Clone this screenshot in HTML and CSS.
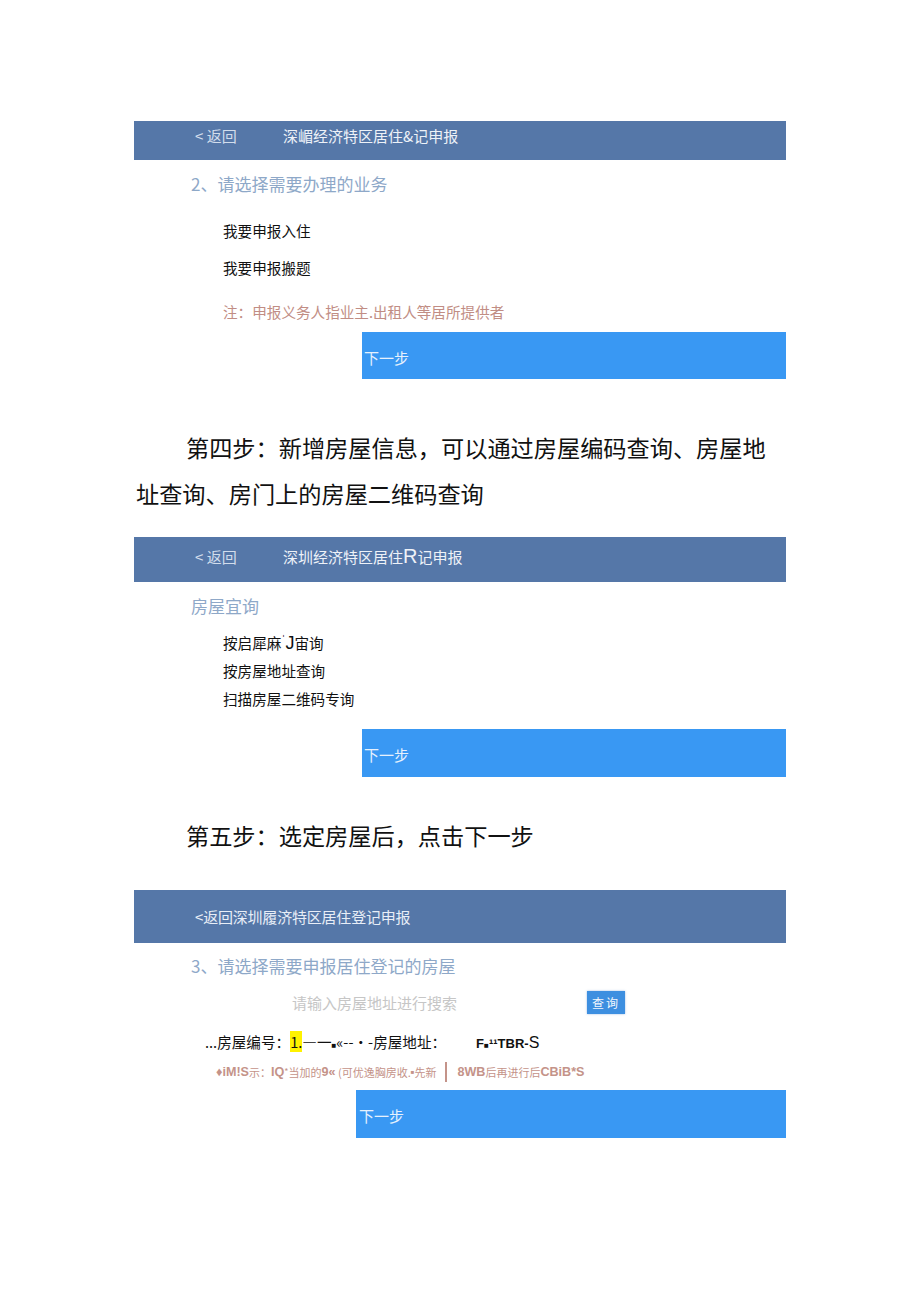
FILE: index.html
```html
<!DOCTYPE html>
<html lang="zh-CN">
<head>
<meta charset="utf-8">
<title>深圳经济特区居住登记申报</title>
<link rel="stylesheet" href="styles.css">
</head>
<body>
<div class="page">
  <div class="bar bar1"><span class="back">&lt; 返回</span><span class="title">深嵋经济特区居住&amp;记申报</span></div>
  <div class="sect sect1">2、请选择需要办理的业务</div>
  <div class="opt opt1">我要申报入住</div>
  <div class="opt opt2">我要申报搬题</div>
  <div class="note note1">注：申报义务人指业主.出租人等居所提供者</div>
  <div class="next next1">下一步</div>

  <p class="step step4">第四步：新增房屋信息，可以通过房屋编码查询、房屋地址查询、房门上的房屋二维码查询</p>

  <div class="bar bar2"><span class="back">&lt; 返回</span><span class="title">深圳经济特区居住<span class="bigr">R</span>记申报</span></div>
  <div class="sect sect2">房屋宜询</div>
  <div class="list2">
    <div class="opt3">按启犀麻<span class="tick">ˈ</span><span class="bigj">J</span>宙询</div>
    <div class="opt3">按房屋地址查询</div>
    <div class="opt3">扫描房屋二维码专询</div>
  </div>
  <div class="next next2">下一步</div>

  <p class="step step5">第五步：选定房屋后，点击下一步</p>

  <div class="bar bar3"><span class="back3">&lt;返回深圳履济特区居住登记申报</span></div>
  <div class="sect sect3">3、请选择需要申报居住登记的房屋</div>
  <div class="search">
    <span class="placeholder">请输入房屋地址进行搜索</span>
    <span class="qbtn">查询</span>
  </div>
  <div class="house">...房屋编号：<span class="hl">1.</span>—一<span class="sq">■</span>«--•-房屋地址：<span class="code"><b>F<span class="sq">■</span>¹¹TBR-</b><span class="s">S</span></span></div>
  <div class="tip"><b>♦iM!S</b>示：<b>IQ</b><span class="sm">*</span>当加的<b>9«</b> (可优逸胸房收.<span class="sq2">■</span>先新<span class="vbar"></span><b>8WB</b>后再进行后<b>CBiB*S</b></div>
  <div class="next next3">下一步</div>
</div>
</body>
</html>
```
FILE: styles.css
```css
html, body {
  margin: 0;
  padding: 0;
  background: #ffffff;
}
body {
  font-family: "Noto Sans CJK SC", "Liberation Sans", sans-serif;
  color: #111111;
}
.page {
  width: 652px;
  margin-left: 134px;
  padding-top: 121px;
  padding-bottom: 163px;
}
.bar {
  background: #5577a8;
  color: #e8eef7;
  font-size: 15px;
  padding-left: 61px;
  box-sizing: border-box;
  display: flex;
}
.bar1 {
  height: 39px;
  line-height: 30px;
}
.bar2 {
  height: 45px;
  line-height: 40px;
  margin-top: 21px;
}
.bar3 {
  height: 53px;
  line-height: 54px;
  margin-top: 32px;
}
.back {
  width: 88px;
  color: #d2ddec;
}
.back3 {
  color: #e8eef7;
  letter-spacing: -0.2px;
}
.title {
  color: #eef2f8;
}
.bigr {
  font-family: "Liberation Sans", sans-serif;
  font-size: 20px;
  line-height: 0;
}
.sect {
  color: #8ea8c8;
  font-size: 17px;
  line-height: 24px;
  padding-left: 57px;
}
.sect1 { margin-top: 12px; }
.sect2 { margin-top: 12px; }
.sect3 { margin-top: 11px; }
.opt {
  font-size: 14.6px;
  line-height: 20px;
  padding-left: 89px;
}
.opt1 { margin-top: 25px; }
.opt2 { margin-top: 17px; }
.note {
  font-size: 14.6px;
  line-height: 20px;
  padding-left: 89px;
  color: #c18d84;
}
.note1 { margin-top: 24px; }
.next {
  background: #3998f3;
  color: #e6f1fd;
  font-size: 15px;
  line-height: 20px;
  padding-top: 16px;
  padding-left: 2px;
  box-sizing: border-box;
}
.next1 {
  margin-top: 10px;
  margin-left: 228px;
  height: 47px;
}
.next2 {
  margin-top: 16px;
  margin-left: 228px;
  height: 48px;
}
.next3 {
  margin-top: 8px;
  margin-left: 222px;
  height: 48px;
  padding-left: 3px;
}
.step {
  margin: 0;
  font-size: 23.2px;
  line-height: 46px;
  width: 640px;
  padding-left: 2px;
  text-indent: 50px;
  color: #111111;
}
.step4 { margin-top: 45px; }
.step5 { margin-top: 35px; }
.list2 {
  margin-top: 11px;
  padding-left: 89px;
  font-size: 14.6px;
}
.opt3 {
  height: 28px;
  line-height: 28px;
}
.tick {
  font-size: 12px;
  line-height: 0;
  vertical-align: 5px;
}
.bigj {
  font-family: "Liberation Sans", sans-serif;
  font-size: 18px;
  line-height: 0;
}
.search {
  margin-top: 10px;
  height: 28px;
  display: flex;
  align-items: center;
  padding-left: 158px;
}
.placeholder {
  color: #c6c6c6;
  font-size: 15px;
  width: 295px;
}
.qbtn {
  width: 38px;
  height: 23px;
  line-height: 23px;
  background: #3d8fe0;
  color: #f2f7fd;
  font-size: 12px;
  text-align: center;
  letter-spacing: 2px;
  box-shadow: 0 0 2px rgba(60,120,200,0.5);
}
.house {
  margin-top: 14px;
  height: 24px;
  line-height: 24px;
  font-size: 14.6px;
  padding-left: 71px;
}
.hl {
  background: #fff200;
}
.sq {
  font-family: "Liberation Sans", sans-serif;
  font-size: 8px;
}
.sq2 {
  font-family: "Liberation Sans", sans-serif;
  font-size: 6px;
}
.code {
  margin-left: 30px;
}
.code b {
  font-family: "Liberation Sans", sans-serif;
  font-size: 13px;
}
.code .s {
  font-family: "Liberation Sans", sans-serif;
  font-size: 16px;
  line-height: 0;
}
.tip {
  margin-top: 8px;
  height: 20px;
  line-height: 20px;
  font-size: 11px;
  padding-left: 82px;
  color: #c49389;
  display: flex;
  align-items: center;
  white-space: pre;
}
.tip b {
  font-family: "Liberation Sans", sans-serif;
  font-size: 12.6px;
  font-weight: bold;
}
.sm {
  font-size: 9px;
  vertical-align: 3px;
  line-height: 0;
}
.vbar {
  display: inline-block;
  width: 2px;
  height: 20px;
  background: #c49389;
  margin: 0 10px 0 9px;
}
```
